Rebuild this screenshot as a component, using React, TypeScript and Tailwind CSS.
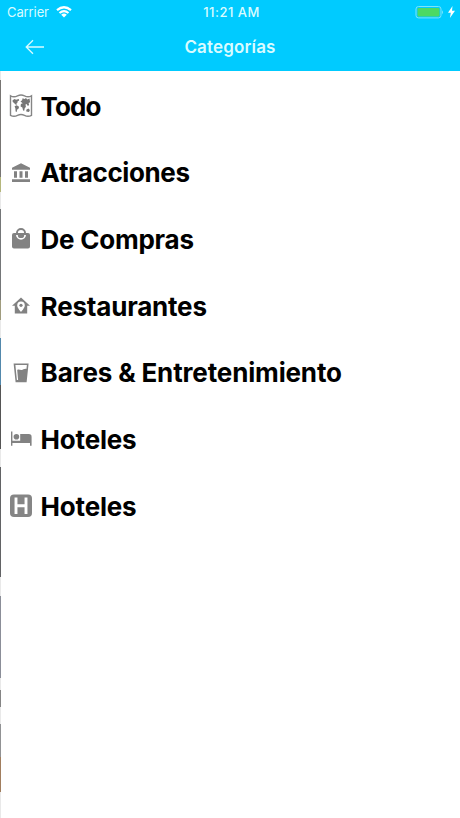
import type { ReactNode } from "react";

const MapIcon = () => (
  <svg viewBox="0 0 24 24" className="h-6 w-6" fill="none" stroke="#858585" strokeWidth="1.4">
    <path d="M1.5 1.8Q5 3.8 8.5 1.8Q12 .3 15.5 1.8Q19 3.8 22.5 1.8V21.3Q19 23.3 15.5 21.3Q12 19.7 8.5 21.3Q5 23.3 1.5 21.3Z" />
    <path
      d="M3.6 6.2l2-1.2 1.5.8 2.7-.8.4 1.6-1.5.7-.4 1.6-1.2 1 1.4 1.3-2-.6L4.8 8.7 3.7 8zM5.6 12.2l2-.9 2.5 1.4-.6 2-1.3.8-.5 2.4-1.1-.4-.2-2.9zM11.5 7.4l1.6-1.2.5-1.9 2 .8 1.4-1 1.2 1.3 2.3-.8.6 3.6-1.5.8.5 2.1-1.2 1-1.4-2-1 .5.4 2.4-1.1.9-.6 2.8-1.1-.2-.7-2.9-1.8-1.2.3-2.3 1.8-.8zM17.3 15.7l2.1-1.1 1.5 1.5-.9 1.8-2.7-.5z"
      fill="#777"
      stroke="none"
    />
  </svg>
);

const MuseumIcon = () => (
  <svg viewBox="0 0 24 24" className="h-6 w-6" fill="#828282">
    <path d="M12 2.2L3 6.8V8.7h18V6.8zM5 10.3h3v6.4H5zM10.5 10.3h3v6.4h-3zM16 10.3h3v6.4h-3zM3 18.2h18v2.9H3z" />
  </svg>
);

const BagIcon = () => (
  <svg viewBox="0 0 24 24" className="h-6 w-6" fill="#828282">
    <path
      fillRule="evenodd"
      d="M19 6h-2a5 5 0 0 0-10 0H5a2 2 0 0 0-2 2v11.5a2 2 0 0 0 2 2h14a2 2 0 0 0 2-2V8a2 2 0 0 0-2-2zM12 2.9a3.1 3.1 0 0 1 3.1 3.1H8.9A3.1 3.1 0 0 1 12 2.9zM12 12.7a5 5 0 0 1-5-4.8h1.8a3.2 3.2 0 0 0 6.4 0H17a5 5 0 0 1-5 4.8z"
    />
  </svg>
);

const HouseIcon = () => (
  <svg viewBox="0 0 24 24" className="h-6 w-6" fill="#828282">
    <path
      fillRule="evenodd"
      d="M12 3.4L3 11.7h2.8V19.6h12.4v-7.9H21zM12 7.6a3.8 3.8 0 0 1 3.8 3.8c0 2.5-3.8 6.4-3.8 6.4s-3.8-3.9-3.8-6.4A3.8 3.8 0 0 1 12 7.6z"
    />
    <circle cx="12" cy="11.3" r="1.6" />
  </svg>
);

const DrinkIcon = () => (
  <svg viewBox="0 0 24 24" className="h-6 w-6" fill="#828282">
    <path
      fillRule="evenodd"
      d="M4.6 2.5h15l-2 18.8H6.6zM6.4 3.9l1.5 15.2h1.2L8.2 8.9c1.8-.9 3 .3 4.4.1 1.6-.2 2.4-1.4 4.8-1.1l.5-4z"
    />
  </svg>
);

const BedIcon = () => (
  <svg viewBox="0 0 24 24" className="h-6 w-6" fill="#828282">
    <path d="M2 4.5h1.4v9.3h7.8V7.1h8.6q2.8 0 2.8 2.8v8.9H21v-2.8H3.4v2.8H2z" />
    <circle cx="7.4" cy="9.8" r="2.8" />
  </svg>
);

const HotelIcon = () => (
  <svg viewBox="0 0 24 24" className="h-6 w-6" fill="#858585">
    <rect x="1" y=".4" width="22" height="22.6" rx="4" />
    <path d="M7 3.5v16.4M17 3.5v16.4M7 11.7h10" stroke="#fff" strokeWidth="2.9" />
  </svg>
);

const categories: { label: string; icon: ReactNode; spacing: string }[] = [
  { label: "Todo", icon: <MapIcon />, spacing: "tracking-[-0.9px]" },
  { label: "Atracciones", icon: <MuseumIcon />, spacing: "tracking-[-0.4px]" },
  { label: "De Compras", icon: <BagIcon />, spacing: "tracking-[-0.25px]" },
  { label: "Restaurantes", icon: <HouseIcon />, spacing: "tracking-[-0.2px]" },
  { label: "Bares & Entretenimiento", icon: <DrinkIcon />, spacing: "tracking-[-0.15px]" },
  { label: "Hoteles", icon: <BedIcon />, spacing: "tracking-[-0.2px]" },
  { label: "Hoteles", icon: <HotelIcon />, spacing: "tracking-[-0.2px]" },
];

// sliver of the screen underneath the drawer
function PreviousScreenEdge() {
  return (
    <div className="flex w-px shrink-0 flex-col bg-[#e9e9e9]">
      <div className="mt-[9px] h-[97px] bg-[#777573]" />
      <div className="h-[15px] bg-[#b5b77c]" />
      <div className="mt-[17px] h-[91px] bg-[#747678]" />
      <div className="h-5 bg-[#a09c7e]" />
      <div className="mt-[18px] h-[47px] bg-[#5288ac]" />
      <div className="h-16 bg-[#555]" />
      <div className="mt-[18px] h-[110px] bg-[#626365]" />
      <div className="mt-[19px] h-[82px] bg-[#8b8e98]" />
      <div className="mt-3 h-[17px] bg-[#858585]" />
      <div className="mt-[17px] h-[33px] bg-[#919294]" />
      <div className="h-[35px] bg-[#a17e5e]" />
    </div>
  );
}

function StatusBar() {
  return (
    <div className="grid h-6 grid-cols-[1fr_auto_1fr] items-center pl-[7px] pr-[5px] text-[13px] text-[#d9fbff]">
      <div className="flex items-center gap-[7px]">
        <span className="pt-px tracking-[-0.1px]">Carrier</span>
        <svg viewBox="0 0 16 12" className="h-3 w-4" fill="none" stroke="#fff" strokeWidth="2.2">
          <path d="M1 4.2Q8-1.7 15 4.2M3.5 7Q8 3.2 12.5 7" />
          <path d="M5.2 8.7Q8 6.5 10.8 8.7L8 11.5z" fill="#fff" stroke="none" />
        </svg>
      </div>
      <span className="pl-px pt-px text-center font-medium tracking-[0.5px]">11:21 AM</span>
      <div className="flex items-center justify-end gap-1">
        <svg viewBox="0 0 29 13" className="h-[13px] w-[29px]">
          <rect x="1" y=".5" width="25" height="11.4" rx="2.5" fill="none" stroke="#7ce4fb" />
          <rect x="2.5" y="2" width="22" height="8.4" rx="1" fill="#4cd964" />
          <path d="M27 4.2q2 2 0 4z" fill="#7ce4fb" />
        </svg>
        <svg viewBox="0 0 7 12" className="h-3 w-[7px]" fill="#fff">
          <path d="M4.5 0L0 6.8h2.8L1.9 12 7 4.8H4z" />
        </svg>
      </div>
    </div>
  );
}

export default function App() {
  return (
    <div className="flex h-[818px] w-[460px] flex-col overflow-hidden bg-white font-['Inter','Liberation_Sans',sans-serif]">
      <header className="h-[71px] shrink-0 bg-[#00cbff]">
        <StatusBar />
        <div className="grid h-[47px] grid-cols-[1fr_auto_1fr] items-center text-[#d9fbff]">
          <button aria-label="Atrás" className="-mt-0.5 ml-[25px] w-5">
            <svg viewBox="0 0 20 16" className="h-4 w-5" fill="none" stroke="currentColor" strokeWidth="1.3">
              <path d="M19 8H1.2M8 1.2L1.2 8 8 14.8" />
            </svg>
          </button>
          <h1 className="text-[17px] font-semibold tracking-[0.15px]">Categorías</h1>
        </div>
      </header>
      <div className="flex flex-1">
        <PreviousScreenEdge />
        <nav className="flex-1 pt-[1.8px]">
          {categories.map(({ label, icon, spacing }, i) => (
            <button key={i} className="flex h-[66.67px] w-full items-center gap-[7.6px] pl-2 text-left">
              {icon}
              <span className={`text-[26px] font-bold text-black ${spacing}`}>{label}</span>
            </button>
          ))}
        </nav>
      </div>
    </div>
  );
}
